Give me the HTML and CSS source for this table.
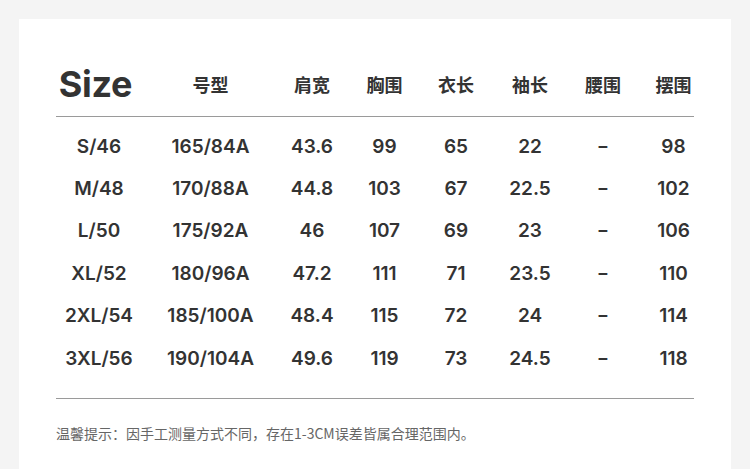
FILE: index.html
```html
<!DOCTYPE html>
<html lang="zh-CN">
<head>
<meta charset="utf-8">
<title>尺码表</title>
<link rel="stylesheet" href="styles.css">
</head>
<body>
<div class="card">
  <div class="table">
    <div class="row head">
      <div class="cell size-title">Size</div>
      <div class="cell cn">号型</div>
      <div class="cell cn">肩宽</div>
      <div class="cell cn">胸围</div>
      <div class="cell cn">衣长</div>
      <div class="cell cn">袖长</div>
      <div class="cell cn">腰围</div>
      <div class="cell cn">摆围</div>
    </div>
    <div class="body">
      <div class="row"><div class="cell">S/46</div><div class="cell">165/84A</div><div class="cell">43.6</div><div class="cell">99</div><div class="cell">65</div><div class="cell">22</div><div class="cell dash">-</div><div class="cell">98</div></div>
      <div class="row"><div class="cell">M/48</div><div class="cell">170/88A</div><div class="cell">44.8</div><div class="cell">103</div><div class="cell">67</div><div class="cell">22.5</div><div class="cell dash">-</div><div class="cell">102</div></div>
      <div class="row"><div class="cell">L/50</div><div class="cell">175/92A</div><div class="cell">46</div><div class="cell">107</div><div class="cell">69</div><div class="cell">23</div><div class="cell dash">-</div><div class="cell">106</div></div>
      <div class="row"><div class="cell">XL/52</div><div class="cell">180/96A</div><div class="cell">47.2</div><div class="cell">111</div><div class="cell">71</div><div class="cell">23.5</div><div class="cell dash">-</div><div class="cell">110</div></div>
      <div class="row"><div class="cell">2XL/54</div><div class="cell">185/100A</div><div class="cell">48.4</div><div class="cell">115</div><div class="cell">72</div><div class="cell">24</div><div class="cell dash">-</div><div class="cell">114</div></div>
      <div class="row"><div class="cell">3XL/56</div><div class="cell">190/104A</div><div class="cell">49.6</div><div class="cell">119</div><div class="cell">73</div><div class="cell">24.5</div><div class="cell dash">-</div><div class="cell">118</div></div>
    </div>
  </div>
  <p class="note">温馨提示：因手工测量方式不同，存在1-3CM误差皆属合理范围内。</p>
</div>
</body>
</html>
```
FILE: styles.css
```css
html, body {
  margin: 0;
  padding: 0;
}
body {
  background: #f4f4f4;
  font-family: Inter, "Noto Sans CJK SC", sans-serif;
  color: #333;
  height: 469px;
  overflow: hidden;
  padding: 19px 19px 0 19px;
  box-sizing: border-box;
}
.card {
  background: #fff;
  padding: 40px 37px 0 37px;
  height: 450px;
  box-sizing: border-box;
}
.row {
  display: grid;
  grid-template-columns: 86px 137px 66px 79px 64px 84px 62px 79px;
  align-items: center;
}
.cell {
  text-align: center;
  white-space: nowrap;
}
.head {
  height: 50px;
  padding-bottom: 7px;
  border-bottom: 1px solid #9a9a9a;
}
.size-title {
  font-family: Inter, sans-serif;
  font-weight: 700;
  font-size: 36px;
  letter-spacing: -0.3px;
  margin-right: 7px;
}
.cn {
  font-family: "Noto Sans CJK SC", sans-serif;
  font-weight: 700;
  font-size: 18px;
}
.body {
  padding: 8px 0 19px;
  border-bottom: 1px solid #9a9a9a;
}
.body .row {
  height: 42.4px;
  font-size: 19px;
  font-weight: 600;
}
.dash {
  transform: scaleX(1.4);
}
.note {
  margin: 24px 0 0;
  font-family: "Noto Sans CJK SC", sans-serif;
  font-size: 14px;
  line-height: 20px;
  color: #666;
}
```
